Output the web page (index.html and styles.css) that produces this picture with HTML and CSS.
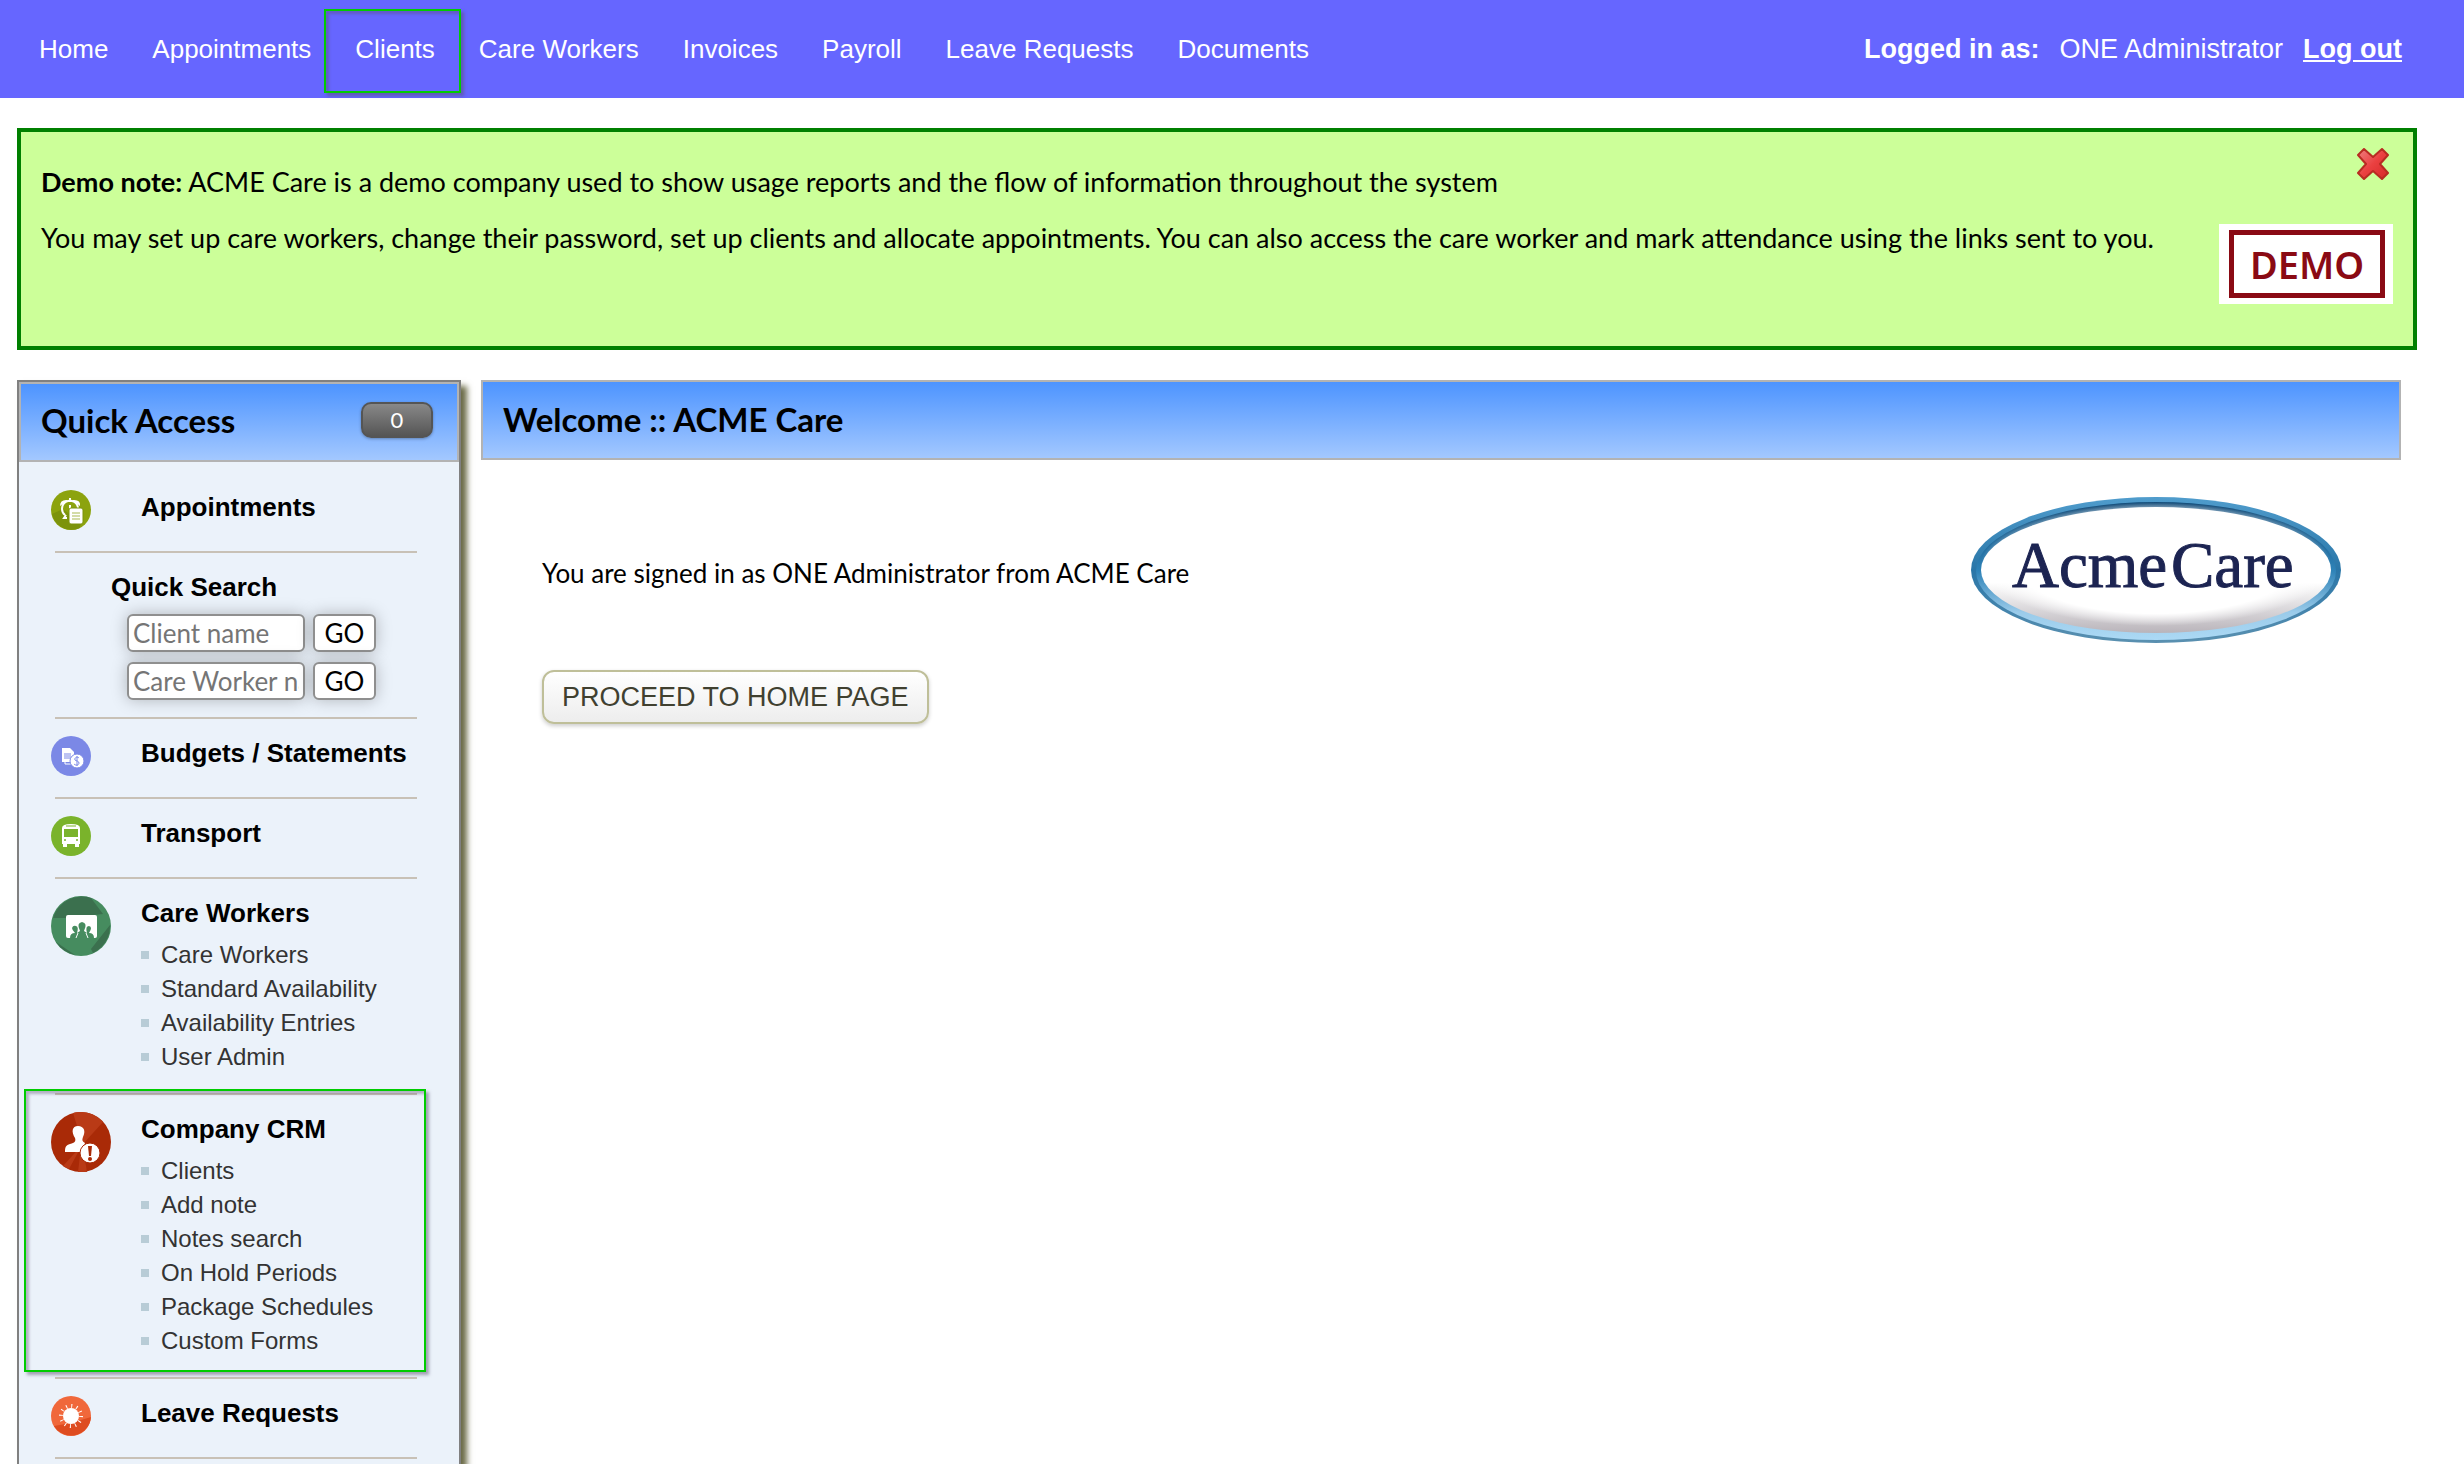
FILE: index.html
```html
<!DOCTYPE html>
<html lang="en">
<head>
  <meta charset="UTF-8">
  <meta name="viewport" content="width=device-width, initial-scale=1.0">
  <title>Welcome :: ACME Care</title>
  <link rel="stylesheet" href="styles.css">
</head>
<body>
  <header class="topbar">
    <nav class="menu">
      <a href="#">Home</a>
      <a href="#">Appointments</a>
      <a href="#" class="marked">Clients</a>
      <a href="#">Care Workers</a>
      <a href="#">Invoices</a>
      <a href="#">Payroll</a>
      <a href="#">Leave Requests</a>
      <a href="#">Documents</a>
    </nav>
    <div class="user">
      <strong>Logged in as:</strong>
      <span>ONE Administrator</span>
      <a href="#" class="logout">Log out</a>
    </div>
  </header>

  <section class="notice">
    <div class="notice-text">
      <p><strong>Demo note:</strong> ACME Care is a demo company used to show usage reports and the flow of information throughout the system</p>
      <p>You may set up care workers, change their password, set up clients and allocate appointments. You can also access the care worker and mark attendance using the links sent to you.</p>
    </div>
    <div class="notice-side">
      <button type="button" class="close" aria-label="Close">
        <svg width="32" height="32" viewBox="0 0 32 32">
          <defs>
            <linearGradient id="red" x1="0" y1="0" x2="1" y2="1">
              <stop offset="0" stop-color="#f08080"/>
              <stop offset="0.5" stop-color="#ea4040"/>
              <stop offset="1" stop-color="#d62828"/>
            </linearGradient>
          </defs>
          <path d="M7 1 L16 9 L25 1 L31 7 L23 16 L31 25 L25 31 L16 23 L7 31 L1 25 L9 16 L1 7 Z" fill="url(#red)" stroke="#b82c22" stroke-width="2" stroke-linejoin="round"/>
        </svg>
      </button>
      <div class="stamp"><span>DEMO</span></div>
    </div>
  </section>

  <div class="columns">
    <aside class="sidebar">
      <div class="panel-head">
        <h2>Quick Access</h2>
        <span class="badge">0</span>
      </div>
      <ul class="access">
        <li class="item">
          <div class="icon">
            <svg width="40" height="40" viewBox="0 0 40 40">
              <circle cx="20" cy="20" r="20" fill="#8ca30e"/>
              <path d="M1 24 L12 19 L30 33 L29 38 A20 20 0 0 1 1 24Z" fill="#7c930c"/>
              <path d="M14 25 A8 8 0 1 1 27 18" fill="none" stroke="#fff" stroke-width="2"/>
              <path d="M9 16 Q9 9 17 10 Z M29 16 Q30 9 21 10 Z" fill="#fff"/>
              <path d="M19 8 V12 M19 15 V19 M15 25 L13 28 H16" stroke="#fff" stroke-width="2" fill="none"/>
              <rect x="18" y="18" width="14" height="16" rx="2" fill="#fff" stroke="#7c930c"/>
              <path d="M21 23 H29 M21 26 H29 M21 29 H29" stroke="#a9b951" stroke-width="1"/>
            </svg>
          </div>
          <div class="item-body"><h3><a href="#">Appointments</a></h3></div>
        </li>
        <li class="search">
          <h3>Quick Search</h3>
          <form class="search-row">
            <input type="text" placeholder="Client name" aria-label="Client name">
            <button type="button">GO</button>
          </form>
          <form class="search-row">
            <input type="text" placeholder="Care Worker name" aria-label="Care Worker name">
            <button type="button">GO</button>
          </form>
        </li>
        <li class="item">
          <div class="icon">
            <svg width="40" height="40" viewBox="0 0 40 40">
              <circle cx="20" cy="20" r="20" fill="#7b88e6"/>
              <path d="M11 12 H19 L23 16 V26 H11 Z" fill="#fff"/>
              <path d="M14 26 V28 H21" stroke="#fff" stroke-width="1" fill="none"/>
              <path d="M13 18 H20 M13 20 H20 M13 22 H20" stroke="#7b88e6" stroke-width="1"/>
              <circle cx="26" cy="25" r="7" fill="#fff" stroke="#7b88e6"/>
              <path d="M28 22 C26 20 23 22 24 24 C25 25 28 25 28 27 C28 29 25 30 23 28 M26 20 V30" stroke="#7b88e6" stroke-width="1" fill="none"/>
            </svg>
          </div>
          <div class="item-body"><h3><a href="#">Budgets / Statements</a></h3></div>
        </li>
        <li class="item">
          <div class="icon">
            <svg width="40" height="40" viewBox="0 0 40 40">
              <circle cx="20" cy="20" r="20" fill="#7ab32b"/>
              <path d="M11 28 V12 Q11 8 20 8 Q29 8 29 12 V28 Z" fill="#fff"/>
              <path d="M12 27 H16 V31 H12 Z M24 27 H28 V31 H24 Z" fill="#fff"/>
              <path d="M15 10 H25" stroke="#7ab32b" stroke-width="1"/>
              <path d="M13 13 H27 V21 H13 Z" fill="#7ab32b"/>
              <circle cx="14" cy="24" r="1" fill="#7ab32b"/>
              <circle cx="26" cy="24" r="1" fill="#7ab32b"/>
            </svg>
          </div>
          <div class="item-body"><h3><a href="#">Transport</a></h3></div>
        </li>
        <li class="item">
          <div class="icon">
            <svg width="60" height="60" viewBox="0 0 60 60">
              <circle cx="30" cy="30" r="30" fill="#468c5f"/>
              <path d="M2 22 A30 30 0 0 1 40 2 L52 18 L15 22 Z" fill="#3b704e"/>
              <path d="M59 29 L40 53 L42 57 A30 30 0 0 0 59 29Z M5 46 L24 59 A30 30 0 0 1 5 46Z" fill="#3b704e"/>
              <rect x="15" y="19" width="31" height="23" rx="2" fill="#fff"/>
              <path d="M19 42 Q19 37 24 37 Q21 34 21 32 Q22 29 25 30 Q28 31 26 37 L29 35 Q25 27 31 26 Q37 27 33 35 L36 37 Q34 30 38 30 Q42 31 38 37 Q43 37 43 42 Z" fill="#468c5f"/>
              <path d="M25 42 L27 37 M37 42 L35 37" stroke="#fff" stroke-width="1"/>
            </svg>
          </div>
          <div class="item-body">
            <h3><a href="#">Care Workers</a></h3>
            <ul class="links">
              <li><a href="#">Care Workers</a></li>
              <li><a href="#">Standard Availability</a></li>
              <li><a href="#">Availability Entries</a></li>
              <li><a href="#">User Admin</a></li>
            </ul>
          </div>
        </li>
        <li class="item marked">
          <div class="icon">
            <svg width="60" height="60" viewBox="0 0 60 60">
              <circle cx="30" cy="30" r="30" fill="#a92a07"/>
              <path d="M22 1 A30 30 0 0 1 52 10 L12 54 L18 57 L30 35 L27 60 H36 L31 30 Z" fill="#b93a16"/>
              <path d="M27 14 C33 14 35 19 32 25 C31 28 31 29 34 31 L31 40 H14 C14 35 15 33 19 32 C24 31 25 29 24 26 C20 20 21 14 27 14Z" fill="#fff"/>
              <circle cx="39" cy="41" r="10" fill="#fff" stroke="#a92a07" stroke-width="1"/>
              <path d="M37 34 H41 L40 44 H38 Z" fill="#a92a07"/>
              <circle cx="39" cy="47" r="2" fill="#a92a07"/>
            </svg>
          </div>
          <div class="item-body">
            <h3><a href="#">Company CRM</a></h3>
            <ul class="links">
              <li><a href="#">Clients</a></li>
              <li><a href="#">Add note</a></li>
              <li><a href="#">Notes search</a></li>
              <li><a href="#">On Hold Periods</a></li>
              <li><a href="#">Package Schedules</a></li>
              <li><a href="#">Custom Forms</a></li>
            </ul>
          </div>
        </li>
        <li class="item">
          <div class="icon">
            <svg width="40" height="40" viewBox="0 0 40 40">
              <circle cx="20" cy="20" r="20" fill="#f0683b"/>
              <path d="M3 30 L20 27 L40 21 A20 20 0 0 1 3 30Z" fill="#de4c20"/>
              <circle cx="20" cy="20" r="8" fill="#fff"/>
              <circle cx="20" cy="20" r="10" fill="none" stroke="#fff" stroke-width="4" stroke-dasharray="1 4.236"/>
            </svg>
          </div>
          <div class="item-body"><h3><a href="#">Leave Requests</a></h3></div>
        </li>
      </ul>
    </aside>

    <main class="content">
      <div class="panel-head">
        <h1>Welcome :: ACME Care</h1>
      </div>
      <div class="welcome">
        <div>
          <p>You are signed in as ONE Administrator from ACME Care</p>
          <button type="button" class="proceed">PROCEED TO HOME PAGE</button>
        </div>
        <svg class="logo" width="370" height="148" viewBox="0 0 370 148" role="img" aria-label="Acme Care">
          <defs>
            <linearGradient id="rim" x1="0" y1="0" x2="0" y2="1">
              <stop offset="0" stop-color="#4f9ccc"/>
              <stop offset="0.5" stop-color="#2a76a8"/>
              <stop offset="1" stop-color="#5a90b0"/>
            </linearGradient>
            <linearGradient id="rim-inner" x1="0" y1="0" x2="0" y2="1">
              <stop offset="0" stop-color="#0d4775"/>
              <stop offset="0.5" stop-color="#2f83b8"/>
              <stop offset="0.8" stop-color="#9acbea"/>
              <stop offset="1" stop-color="#acd9f5"/>
            </linearGradient>
            <linearGradient id="face" x1="0" y1="0" x2="0" y2="1">
              <stop offset="0.6" stop-color="#ffffff"/>
              <stop offset="1" stop-color="#b9b4ba"/>
            </linearGradient>
            <radialGradient id="glow">
              <stop offset="0.8" stop-color="#ffffff"/>
              <stop offset="1" stop-color="#ffffff" stop-opacity="0"/>
            </radialGradient>
          </defs>
          <ellipse cx="185" cy="74" rx="185" ry="73" fill="url(#rim)"/>
          <ellipse cx="185" cy="75" rx="180" ry="69" fill="url(#rim-inner)"/>
          <ellipse cx="185" cy="74" rx="175" ry="63" fill="url(#face)"/>
          <ellipse cx="185" cy="68" rx="175" ry="62" fill="url(#glow)"/>
          <text x="41" y="91">Acme</text>
          <text x="200" y="91">Care</text>
        </svg>
      </div>
    </main>
  </div>
</body>
</html>
```
FILE: styles.css
```css
* {
  box-sizing: border-box;
}

body {
  margin: 0;
  min-height: 100vh;
  display: flex;
  flex-direction: column;
  background-color: #ffffff;
  color: #000000;
  font-family: "Trebuchet MS", Lato, sans-serif;
  font-size: 26px;
  line-height: 32px;
}

h1, h2, h3, p, ul {
  margin: 0;
  padding: 0;
}

ul {
  list-style: none;
}

a {
  color: inherit;
  text-decoration: none;
}

svg {
  display: block;
}

/* Top bar */
.topbar {
  display: flex;
  justify-content: space-between;
  align-items: center;
  height: 98px;
  padding: 0 62px 0 17px;
  background-color: #6666ff;
  color: #ffffff;
  font-family: Arial, "Liberation Sans", sans-serif;
}

.menu {
  display: flex;
}

.menu a {
  padding: 0 22px;
  line-height: 98px;
}

.user {
  display: flex;
  gap: 20px;
  font-size: 27px;
}

.logout {
  font-weight: bold;
  text-decoration: underline;
}

/* Green frames */
.marked {
  position: relative;
}

.marked::before {
  content: "";
  position: absolute;
  border: 2px solid #00cc00;
  box-shadow: 3px 3px 3px rgba(90, 80, 110, 0.5), inset 3px 3px 3px rgba(90, 80, 110, 0.4);
  pointer-events: none;
}

.menu .marked::before {
  top: 9px;
  right: -4px;
  bottom: 5px;
  left: -9px;
}

.item.marked::before {
  top: -6px;
  right: -9px;
  bottom: 5px;
  left: -31px;
}

/* Demo note */
.notice {
  display: flex;
  justify-content: space-between;
  margin: 30px 47px 30px 17px;
  padding: 16px 20px 42px;
  border: 4px solid #008000;
  background-color: #ccff99;
}

.notice-text {
  padding-top: 18px;
  font-size: 27px;
}

.notice-text p {
  margin-bottom: 24px;
}

.notice-side {
  display: flex;
  flex-direction: column;
  align-items: flex-end;
  gap: 44px;
  flex-shrink: 0;
}

.close {
  margin-right: 4px;
  padding: 0;
  border: none;
  background: none;
  cursor: pointer;
}

.stamp {
  padding: 6px 8px 6px 10px;
  width: 174px;
  height: 80px;
  background-color: #ffffff;
}

.stamp span {
  display: flex;
  justify-content: center;
  align-items: center;
  height: 68px;
  border: 5px solid #8a0a14;
  color: #8a0a14;
  font-family: "Noto Sans", sans-serif;
  font-size: 38px;
  font-weight: 600;
}

/* Columns */
.columns {
  display: flex;
  flex: 1;
  gap: 20px;
  padding: 0 63px 0 17px;
}

.panel-head {
  display: flex;
  justify-content: space-between;
  align-items: center;
  height: 80px;
  padding: 0 24px 2px 20px;
  border: 2px solid #b3b3b3;
  background: linear-gradient(#4d94ff, #a3c8ff);
}

.panel-head h1,
.panel-head h2 {
  font-size: 33px;
  font-weight: bold;
}

.sidebar {
  flex: 0 0 444px;
  border: 2px solid #808080;
  border-bottom: none;
  background-color: #ebf2fa;
  box-shadow: 6px 6px 6px #6b6b47;
}

.sidebar .panel-head {
  padding-bottom: 4px;
}

.badge {
  width: 72px;
  height: 36px;
  border: 2px solid #555555;
  border-radius: 10px;
  background: linear-gradient(#888888, #555555);
  box-shadow: 0 1px 3px rgba(0, 0, 0, 0.3);
  color: #ffffff;
  font-size: 22px;
  line-height: 32px;
  text-align: center;
}

.access {
  padding: 11px 42px 0 36px;
}

.access > li {
  border-bottom: 2px solid #c8c1b6;
}

.access h3 {
  font-family: Arial, "Liberation Sans", sans-serif;
  font-size: 26px;
  line-height: 30px;
}

.item {
  display: flex;
  padding: 17px 0 19px;
}

.icon {
  flex: 0 0 90px;
  margin-left: -4px;
}

.item-body {
  min-height: 42px;
  padding-top: 2px;
  white-space: nowrap;
}

.links {
  margin-top: 10px;
  color: #333333;
  font-family: Arial, "Liberation Sans", sans-serif;
  font-size: 24px;
  line-height: 34px;
}

.links li {
  display: flex;
  align-items: center;
  gap: 12px;
}

.links li::before {
  content: "";
  width: 8px;
  height: 8px;
  background-color: #b8ccd6;
}

/* Quick search */
.search {
  padding: 19px 0 17px 56px;
}

.search h3 {
  margin-bottom: 12px;
}

.search-row {
  display: flex;
  gap: 8px;
  margin-left: 16px;
}

.search-row + .search-row {
  margin-top: 10px;
}

.search-row input,
.search-row button {
  height: 38px;
  padding: 0 4px;
  border: 2px solid #8f8f8f;
  border-radius: 6px;
  background-color: #ffffff;
  box-shadow: 0 0 16px rgba(0, 0, 0, 0.25);
  color: #000000;
  font: inherit;
}

.search-row input {
  width: 178px;
}

.search-row input::placeholder {
  color: #757575;
}

.search-row button {
  width: 63px;
  line-height: 32px;
}

/* Main content */
.content {
  flex: 1;
}

.welcome {
  display: flex;
  justify-content: space-between;
  align-items: flex-start;
  padding: 36px 60px 0 61px;
}

.welcome p {
  margin: 61px 0 81px;
}

.proceed {
  height: 54px;
  padding: 0 18px;
  border: 2px solid #bfbf99;
  border-radius: 12px;
  background: linear-gradient(#ffffff, #ededed);
  box-shadow: 0 2px 4px rgba(0, 0, 0, 0.2);
  color: #404030;
  font-family: Arial, "Liberation Sans", sans-serif;
  font-size: 27px;
}

.logo text {
  fill: #1c2452;
  stroke: #1c2452;
  stroke-width: 1px;
  font-family: "Liberation Serif", serif;
  font-size: 65px;
}
```
